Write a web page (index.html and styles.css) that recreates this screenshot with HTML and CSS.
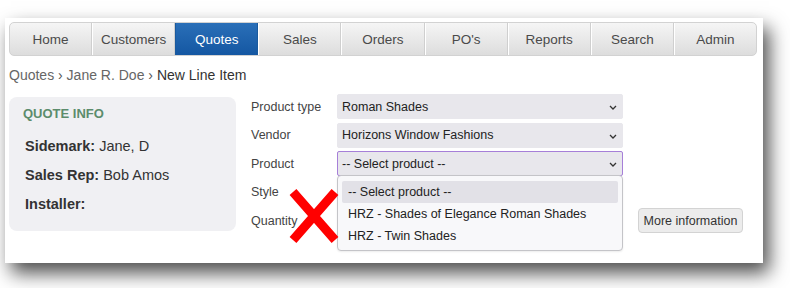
FILE: index.html
```html
<html>
<head>
<title>New Line Item</title>
<link rel="stylesheet" href="styles.css">
</head>
<body>
<div class="window">
  <ul class="tabs">
    <li>Home</li>
    <li>Customers</li>
    <li class="active">Quotes</li>
    <li>Sales</li>
    <li>Orders</li>
    <li>PO's</li>
    <li>Reports</li>
    <li>Search</li>
    <li>Admin</li>
  </ul>
  <p class="crumbs"><a href="#">Quotes</a> &rsaquo; <a href="#">Jane R. Doe</a> &rsaquo; <span>New Line Item</span></p>

  <div class="content">
    <div class="quote-info">
      <h3>QUOTE INFO</h3>
      <p><b>Sidemark:</b> Jane, D</p>
      <p><b>Sales Rep:</b> Bob Amos</p>
      <p><b>Installer:</b></p>
    </div>

    <form class="line-item">
      <div class="row">
        <label>Product type</label>
        <div class="select">Roman Shades<svg class="chev" width="8" height="5" viewBox="0 0 8 5"><path d="M1 1l3 3 3-3" fill="none" stroke="#333" stroke-width="1.3"/></svg></div>
      </div>
      <div class="row">
        <label>Vendor</label>
        <div class="select">Horizons Window Fashions<svg class="chev" width="8" height="5" viewBox="0 0 8 5"><path d="M1 1l3 3 3-3" fill="none" stroke="#333" stroke-width="1.3"/></svg></div>
      </div>
      <div class="row">
        <label>Product</label>
        <div class="select focus">-- Select product --<svg class="chev" width="8" height="5" viewBox="0 0 8 5"><path d="M1 1l3 3 3-3" fill="none" stroke="#333" stroke-width="1.3"/></svg></div>
        <ul class="options">
          <li class="hover">-- Select product --</li>
          <li>HRZ - Shades of Elegance Roman Shades</li>
          <li>HRZ - Twin Shades</li>
        </ul>
      </div>
      <div class="row">
        <label>Style</label>
        <div class="select"></div>
      </div>
      <div class="row">
        <label>Quantity</label>
        <div class="select"></div>
        <button type="button" class="more">More information</button>
      </div>
      <svg class="reject" width="50" height="54" viewBox="0 0 50 54">
        <path d="M4 3L46 51M46 3L4 51" stroke="#f00" stroke-width="9"/>
      </svg>
    </form>
  </div>
</div>
</body>
</html>
```

FILE: styles.css
```css
html,body {margin:0; padding:0; background:#fff; font-family:"Liberation Sans", Arial, sans-serif; color:#333;}

.window {width:758px; height:245px; margin:18px 0 0 5px; background:#fff; box-shadow:6px 10px 18px rgba(0,0,0,.7);}

.tabs {display:flex; margin:0 6px 0 4px; padding:0; list-style:none; height:34px; position:relative; top:4px; border:1px solid #d2d2d2; border-radius:5px; background:linear-gradient(#f5f5f5, #dddddd); box-sizing:border-box;}
.tabs li {flex:1; display:flex; align-items:center; justify-content:center; font-size:13.5px; color:#4a4a4a; border-left:1px solid #fff; border-right:1px solid #cfcfcf;}
.tabs li:first-child {border-left:none; border-radius:4px 0 0 4px;}
.tabs li:last-child {border-right:none; border-radius:0 4px 4px 0;}
.tabs li.active {background:linear-gradient(#2a6fb8, #1457a2); color:#fff; border-color:#1a5a9e;}

.crumbs {margin:13px 0 0 4px; font-size:14px; line-height:20px; color:#555;}
.crumbs a {color:#666; text-decoration:none;}
.crumbs span {color:#333;}

.content {display:flex; margin:9px 0 0 4px;}

.quote-info {width:227px; height:134px; margin-top:3px; padding:8px 0 0 14px; box-sizing:border-box; background:#f0f0f3; border-radius:8px;}
.quote-info h3 {margin:0; font-size:13px; line-height:18px; color:#5c8c6c;}
.quote-info p {margin:9px 0 0 2px; font-size:14.5px; line-height:20px; color:#333;}
.quote-info h3 + p {margin-top:13px;}

.line-item {position:relative; margin:0 0 0 15px;}
.row {position:relative; display:flex; align-items:center; height:25px; margin-bottom:3.5px;}
.row label {width:86px; font-size:12.5px; color:#444;}
.select {position:relative; width:286px; height:25px; box-sizing:border-box; padding:0 0 0 4px; display:flex; align-items:center; font-size:12.5px; color:#222; background:#e8e7ec; border:1px solid #e8e7ec; border-radius:2px;}
.select.focus {border:1.5px solid #a67fd8;}
.chev {position:absolute; right:5px; top:10px;}

.options {position:absolute; left:86px; top:24px; width:286px; margin:0; padding:5px 4px 3px; box-sizing:border-box; list-style:none; background:#f8f8fa; border:1px solid #c4c4c8; border-radius:4px; z-index:2; box-shadow:0 1px 2px rgba(0,0,0,.08);}
.options li {height:22px; line-height:22px; padding-left:6px; font-size:12.5px; color:#222;}
.options li.hover {background:#e2e1e7; border-radius:2px;}

.more {margin-left:15px; width:105px; height:25px; padding:0; font:12.5px "Liberation Sans", Arial, sans-serif; color:#333; background:#ececec; border:1px solid #d3d3d3; border-radius:4px;}

.reject {position:absolute; left:38px; top:95px; z-index:3;}
```
